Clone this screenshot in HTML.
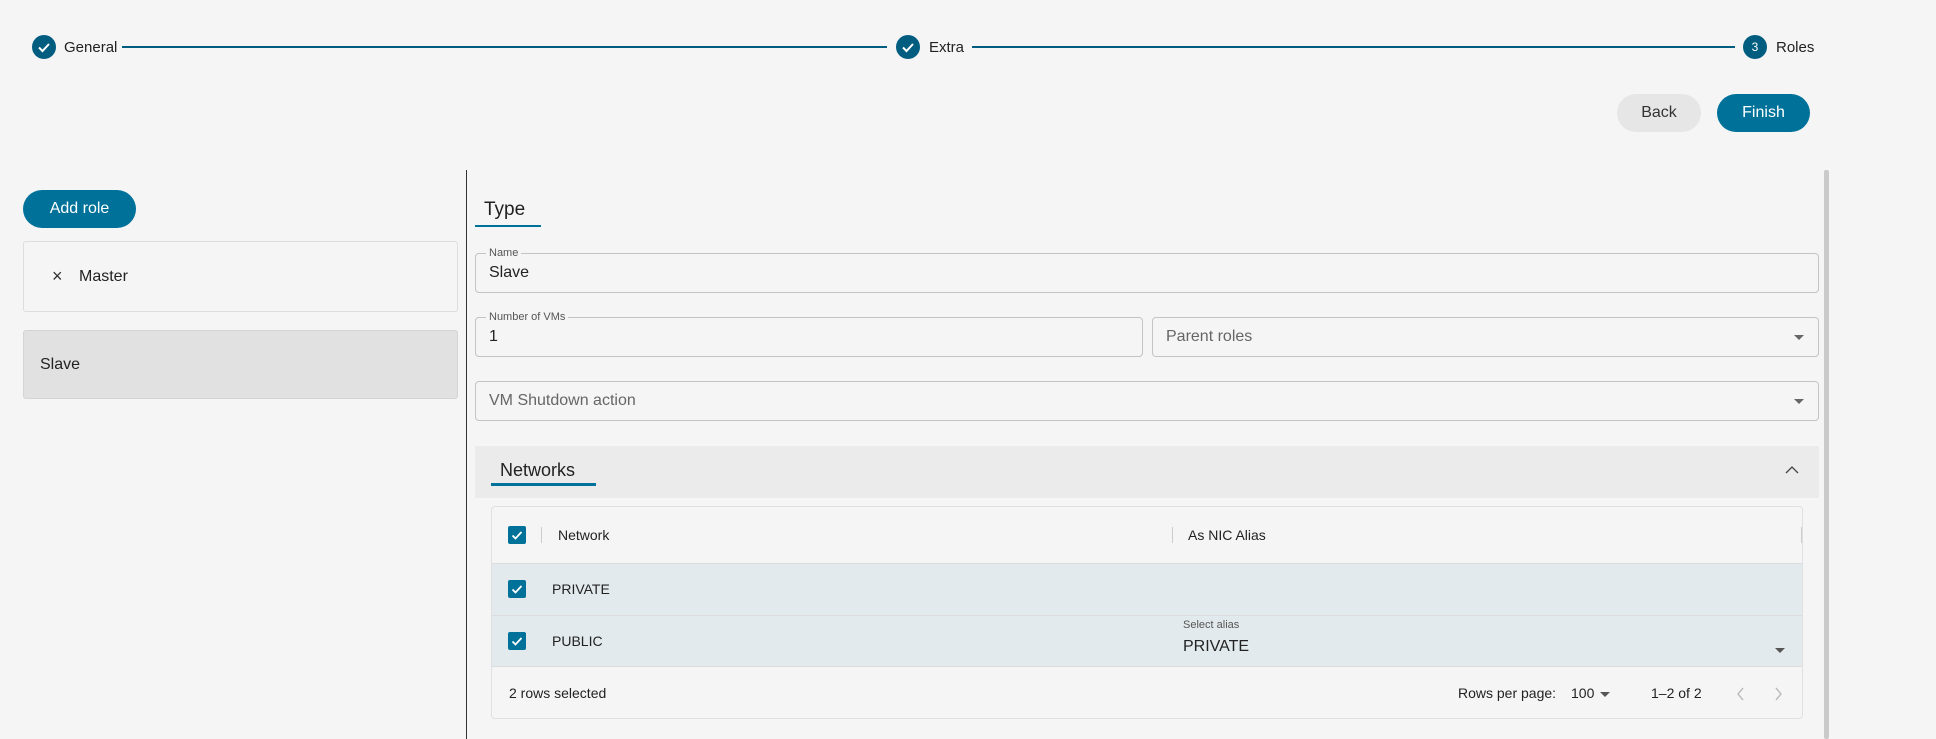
<!DOCTYPE html>
<html><head><meta charset="utf-8"><style>
*{box-sizing:border-box;margin:0;padding:0}
body{width:1936px;height:739px;background:#f5f5f5;font-family:"Liberation Sans",sans-serif;color:#222;position:relative;overflow:hidden}
.a{position:absolute}
.circ{position:absolute;width:24px;height:24px;border-radius:50%;background:#005d80;top:35px;color:#fff;font-size:12px;text-align:center;line-height:24px}
.st{position:absolute;top:39px;font-size:15px;color:#222}
.line{position:absolute;top:46px;height:2px;background:#005d80}
.btn{position:absolute;border-radius:19px;font-size:16px;text-align:center;line-height:38px}
.fld{position:absolute;border:1px solid #c4c4c4;border-radius:4px}
.lbl{position:absolute;font-size:11px;color:#555;background:#f5f5f5;padding:0 3px;top:-8px;left:10px;line-height:14px}
.val{position:absolute;left:13px;font-size:17px;color:#222}
.ph{position:absolute;left:13px;top:10px;font-size:17px;color:#666}
.arr{position:absolute;right:14px;top:17px;width:0;height:0;border-left:5px solid transparent;border-right:5px solid transparent;border-top:5px solid #666}
.cb{position:absolute;width:18px;height:18px;border-radius:2px;background:#00729a}
.cb svg{position:absolute;left:2px;top:2px}
</style></head><body>
<div class="circ" style="left:32px"><svg width="24" height="24"><path d="M7 12.5l3.5 3.5 6.5-7" stroke="#fff" stroke-width="2" fill="none"/></svg></div>
<div class="st" style="left:64px">General</div>
<div class="line" style="left:122px;width:765px"></div>
<div class="circ" style="left:896px"><svg width="24" height="24"><path d="M7 12.5l3.5 3.5 6.5-7" stroke="#fff" stroke-width="2" fill="none"/></svg></div>
<div class="st" style="left:929px">Extra</div>
<div class="line" style="left:972px;width:763px"></div>
<div class="circ" style="left:1743px">3</div>
<div class="st" style="left:1776px">Roles</div>

<div class="btn" style="left:1617px;top:94px;width:84px;background:#e6e6e6;color:#333">Back</div>
<div class="btn" style="left:1717px;top:94px;width:93px;background:#00729a;color:#fff">Finish</div>

<div class="btn" style="left:23px;top:190px;width:113px;background:#00729a;color:#fff">Add role</div>
<div class="a" style="left:23px;top:241px;width:435px;height:71px;border:1px solid #ddd;border-radius:3px"></div>
<div class="a" style="left:52px;top:266px;font-size:18px;color:#333">×</div>
<div class="a" style="left:79px;top:268px;font-size:16px">Master</div>
<div class="a" style="left:23px;top:330px;width:435px;height:69px;border:1px solid #d4d4d4;border-radius:3px;background:#e1e1e1"></div>
<div class="a" style="left:40px;top:356px;font-size:16px">Slave</div>

<div class="a" style="left:466px;top:170px;width:1px;height:569px;background:#333"></div>
<div class="a" style="left:1824px;top:170px;width:5px;height:569px;background:#cacaca;border-radius:2px"></div>

<div class="a" style="left:484px;top:199px;font-size:19px">Type</div>
<div class="a" style="left:475px;top:225px;width:66px;height:2px;background:#00729a"></div>

<div class="fld" style="left:475px;top:253px;width:1344px;height:40px"><div class="lbl">Name</div><div class="val" style="top:10px;font-size:16px">Slave</div></div>
<div class="fld" style="left:475px;top:317px;width:668px;height:40px"><div class="lbl">Number of VMs</div><div class="val" style="top:10px;font-size:16px">1</div></div>
<div class="fld" style="left:1152px;top:317px;width:667px;height:40px"><div class="ph" style="font-size:16px">Parent roles</div><div class="arr"></div></div>
<div class="fld" style="left:475px;top:381px;width:1344px;height:40px"><div class="ph" style="font-size:16px">VM Shutdown action</div><div class="arr"></div></div>

<div class="a" style="left:475px;top:446px;width:1344px;height:52px;background:#ebebeb"></div>
<div class="a" style="left:500px;top:460px;font-size:18px">Networks</div>
<div class="a" style="left:491px;top:483px;width:105px;height:3px;background:#00729a"></div>
<svg class="a" style="left:1785px;top:465px" width="14" height="10"><path d="M1 8l6-6 6 6" stroke="#444" stroke-width="1.3" fill="none"/></svg>

<div class="a" style="left:491px;top:506px;width:1312px;height:213px;border:1px solid #e0e0e0;border-radius:4px"></div>
<div class="a" style="left:492px;top:563px;width:1310px;height:104px;background:#e2eaed;border-top:1px solid #dcdcdc;border-bottom:1px solid #dcdcdc"></div>
<div class="a" style="left:492px;top:615px;width:1310px;height:1px;background:#dcdcdc"></div>
<div class="cb" style="left:508px;top:526px"><svg width="14" height="14"><path d="M2.5 7.5l3 3 6-6.5" stroke="#fff" stroke-width="1.8" fill="none"/></svg></div>
<div class="a" style="left:541px;top:527px;width:1px;height:16px;background:#ccc"></div>
<div class="a" style="left:558px;top:527px;font-size:14px">Network</div>
<div class="a" style="left:1172px;top:527px;width:1px;height:16px;background:#ccc"></div>
<div class="a" style="left:1188px;top:527px;font-size:14px">As NIC Alias</div>
<div class="a" style="left:1801px;top:527px;width:1px;height:16px;background:#ccc"></div>
<div class="cb" style="left:508px;top:580px"><svg width="14" height="14"><path d="M2.5 7.5l3 3 6-6.5" stroke="#fff" stroke-width="1.8" fill="none"/></svg></div>
<div class="a" style="left:552px;top:581px;font-size:14px">PRIVATE</div>
<div class="cb" style="left:508px;top:632px"><svg width="14" height="14"><path d="M2.5 7.5l3 3 6-6.5" stroke="#fff" stroke-width="1.8" fill="none"/></svg></div>
<div class="a" style="left:552px;top:633px;font-size:14px">PUBLIC</div>
<div class="a" style="left:1183px;top:619px;font-size:11px;color:#555">Select alias</div>
<div class="a" style="left:1183px;top:638px;font-size:16px">PRIVATE</div>
<div class="a" style="left:1775px;top:648px;border-left:5px solid transparent;border-right:5px solid transparent;border-top:5px solid #555"></div>

<div class="a" style="left:509px;top:685px;font-size:14px">2 rows selected</div>
<div class="a" style="left:1458px;top:685px;font-size:14px">Rows per page:</div>
<div class="a" style="left:1571px;top:685px;font-size:14px">100</div>
<div class="a" style="left:1600px;top:692px;border-left:5px solid transparent;border-right:5px solid transparent;border-top:5px solid #555"></div>
<div class="a" style="left:1651px;top:685px;font-size:14px">1–2 of 2</div>
<svg class="a" style="left:1736px;top:686px" width="10" height="16"><path d="M7 2l-5 6 5 6" stroke="#bbb" stroke-width="1.4" fill="none"/></svg>
<svg class="a" style="left:1773px;top:686px" width="10" height="16"><path d="M3 2l5 6-5 6" stroke="#bbb" stroke-width="1.4" fill="none"/></svg>
</body></html>
